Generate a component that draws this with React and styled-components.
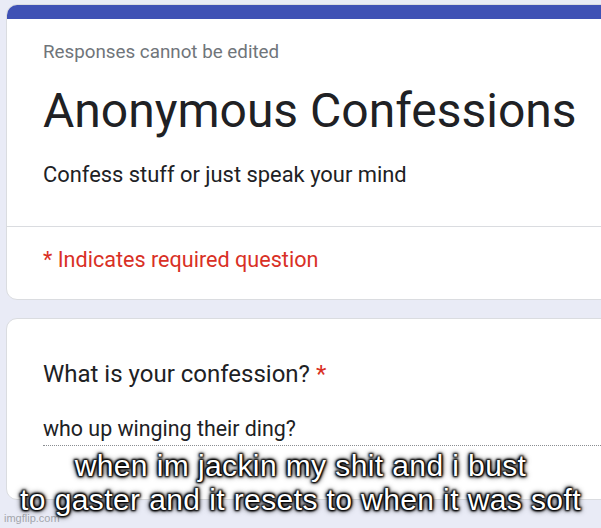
import React from 'react';
import styled, { createGlobalStyle } from 'styled-components';

const GlobalStyle = createGlobalStyle`
  html, body {
    margin: 0;
    padding: 0;
    background: #e9ebf6;
    overflow: hidden;
  }
  body {
    width: 601px;
    height: 528px;
    font-family: Roboto, "Noto Sans", Arial, sans-serif;
  }
`;

// Page
const Page = styled.div`
  position: relative;
  width: 601px;
  height: 528px;
  padding: 4px 0 0 6px;
  box-sizing: border-box;
  overflow: hidden;
`;

// Card
const Card = styled.div`
  width: 640px;
  background: #fff;
  border: 1px solid #dadce0;
  border-radius: 11px;
  box-sizing: border-box;
  overflow: hidden;
  margin-bottom: ${(p) => p.gap || 0}px;
  height: ${(p) => p.h}px;
`;

const TopBar = styled.div`
  height: 14px;
  background: #3f51b5;
`;

const Section = styled.div`
  padding: ${(p) => p.pad};
`;

const Divider = styled.div`
  height: 1px;
  background: #dadce0;
`;

const Note = styled.div`
  font-size: 18.8px;
  line-height: 24px;
  color: #70757a;
`;

const Title = styled.h1`
  margin: 19px 0 0;
  font-size: 48px;
  line-height: 56px;
  font-weight: 400;
  color: #202124;
`;

const Description = styled.div`
  margin-top: 22px;
  font-size: 21.9px;
  line-height: 28px;
  color: #202124;
`;

const Required = styled.div`
  font-size: 21.6px;
  line-height: 28px;
  color: #d93025;
`;

const Question = styled.div`
  font-size: 24px;
  line-height: 30px;
  color: #202124;

  span {
    color: #d93025;
  }
`;

const Answer = styled.div`
  margin-top: 27px;
  font-size: 21.4px;
  line-height: 26px;
  color: #202124;
  padding-bottom: 3px;
  border-bottom: 1px dotted #8a8d91;
`;

// Meme caption on top of everything
const Caption = styled.div`
  position: absolute;
  left: 0;
  right: 0;
  top: 449px;
  text-align: center;
  font-family: "Liberation Sans", Arial, sans-serif;
  font-size: 30px;
  line-height: 34px;
  letter-spacing: 0.4px;
  color: #fff;
  text-shadow: 1px 1px 2px #000, -1px -1px 2px #000, 1px -1px 2px #000,
    -1px 1px 2px #000, 0 0 4px #000, 0 0 6px #000;
`;

const Watermark = styled.div`
  position: absolute;
  left: 4px;
  bottom: 4px;
  font-family: "Liberation Sans", Arial, sans-serif;
  font-size: 11px;
  color: #a3a6ac;
`;

export default function App() {
  return (
    <>
      <GlobalStyle />
      <Page>
        <Card h={296} gap={18}>
          <TopBar />
          <Section pad="21px 0 37px 36px">
            <Note>Responses cannot be edited</Note>
            <Title>Anonymous Confessions</Title>
            <Description>Confess stuff or just speak your mind</Description>
          </Section>
          <Divider />
          <Section pad="19px 0 0 36px">
            <Required>* Indicates required question</Required>
          </Section>
        </Card>
        <Card h={182}>
          <Section pad="40px 0 0 36px">
            <Question>
              What is your confession? <span>*</span>
            </Question>
            <Answer>who up winging their ding?</Answer>
          </Section>
        </Card>
        <Watermark>imgflip.com</Watermark>
        <Caption>
          when im jackin my shit and i bust
          <br />
          to gaster and it resets to when it was soft
        </Caption>
      </Page>
    </>
  );
}
